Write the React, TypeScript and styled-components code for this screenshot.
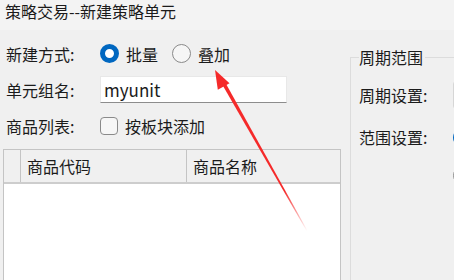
import React from "react";
import styled, { createGlobalStyle } from "styled-components";

const GlobalStyle = createGlobalStyle`
  html, body {
    margin: 0;
    padding: 0;
    background: #f0f0f0;
    overflow: hidden;
  }

  body {
    font-family: "Microsoft YaHei UI", "Noto Sans CJK SC", sans-serif;
    font-size: 16px;
    color: #1b1b1b;
  }
`;

const Window = styled.div`
  position: relative;
  width: 454px;
  height: 280px;
  overflow: hidden;
`;

const TitleBar = styled.div`
  height: 30px;
  padding: 3px 0 0 5px;
  box-sizing: border-box;
  background: #f3f3f3;
  font-size: 16px;
  line-height: 16px;
`;

const Content = styled.div`
  display: flex;
  align-items: flex-start;
`;

const LeftColumn = styled.div`
  width: 344px;
  flex-shrink: 0;
  display: flex;
  flex-direction: column;
  padding-top: 10px;
`;

const FormRow = styled.div`
  display: flex;
  align-items: center;
  height: 27px;
  margin-bottom: 9px;
`;

const Label = styled.span<{ $width?: number; $indent?: number }>`
  display: block;
  width: ${({ $width }) => $width ?? 100}px;
  flex-shrink: 0;
  padding-left: ${({ $indent }) => $indent ?? 6}px;
  box-sizing: border-box;
  white-space: nowrap;
  line-height: 16px;
`;

const Option = styled.label`
  display: flex;
  align-items: center;
  gap: 7px;
  margin-right: 14px;
  line-height: 16px;
`;

const RadioDot = styled.span<{ $checked?: boolean }>`
  display: block;
  flex-shrink: 0;
  width: 19px;
  height: 19px;
  box-sizing: border-box;
  border-radius: 50%;
  background: ${({ $checked }) => ($checked ? "#ffffff" : "#f6f6f6")};
  border: ${({ $checked }) =>
    $checked ? "5.5px solid #0067c0" : "1px solid #8a8a8a"};
`;

const CheckBox = styled.span`
  display: block;
  width: 18px;
  height: 18px;
  box-sizing: border-box;
  border: 1px solid #8a8a8a;
  border-radius: 4px;
  background: #f6f6f6;
`;

const TextInput = styled.div`
  width: 187px;
  height: 27px;
  box-sizing: border-box;
  padding-left: 3px;
  display: flex;
  align-items: center;
  background: #ffffff;
  border: 1px solid #e8e8e8;
  border-bottom: 1px solid #8d8d8d;
  font-size: 17px;
`;

const Table = styled.div`
  margin: 1px 0 0 3px;
  width: 338px;
  height: 140px;
  box-sizing: border-box;
  border: 1px solid #c4c4c4;
  border-bottom: none;
  background: #ffffff;
`;

const HeadRow = styled.div`
  display: grid;
  grid-template-columns: 17px 166px 1fr;
  height: 34px;
  background: #f0f0f0;
  border-bottom: 2px solid #cdcdcd;
  box-sizing: border-box;
`;

const HeadCell = styled.div`
  display: flex;
  align-items: center;
  padding-left: 6px;
  border-right: 1px solid #c4c4c4;
  line-height: 16px;

  &:last-child {
    border-right: none;
  }
`;

const GroupBox = styled.fieldset`
  flex: 1;
  min-width: 0;
  margin: 19px 0 0 6px;
  padding: 0 0 0 8px;
  height: 260px;
  border: 1px solid #dcdcdc;
  border-right: none;
  border-bottom: none;
`;

const Legend = styled.legend`
  padding: 0 2px 0 0;
  line-height: 16px;
`;

const GroupRow = styled.div<{ $top: number }>`
  display: flex;
  align-items: center;
  height: 28px;
  margin-top: ${({ $top }) => $top}px;
`;

const ComboEdge = styled.div`
  flex-shrink: 0;
  width: 40px;
  height: 28px;
  box-sizing: border-box;
  border: 1px solid #d6d6d6;
  border-radius: 3px;
  background: #fbfbfb;
`;

const ArrowLayer = styled.svg`
  position: absolute;
  left: 0;
  top: 0;
  pointer-events: none;
`;

const Radio = ({ checked, text }: { checked?: boolean; text: string }) => (
  <Option>
    <RadioDot $checked={checked} />
    {text}
  </Option>
);

// red annotation arrow drawn over the dialog
const Arrow = () => (
  <ArrowLayer width={454} height={280}>
    <defs>
      <linearGradient id="tail" x1="215" y1="70" x2="307" y2="231" gradientUnits="userSpaceOnUse">
        <stop offset="0" stopColor="#f52a2a" stopOpacity="1" />
        <stop offset="0.75" stopColor="#f52a2a" stopOpacity="1" />
        <stop offset="1" stopColor="#f52a2a" stopOpacity="0" />
      </linearGradient>
    </defs>
    <polygon points="222.2,84.6 225.4,82.8 307.4,230.6 306.6,231" fill="url(#tail)" />
    <polygon points="215,70 229.5,83.2 217.8,89.8" fill="#f52a2a" />
  </ArrowLayer>
);

export default function App() {
  return (
    <Window>
      <GlobalStyle />
      <TitleBar>策略交易--新建策略单元</TitleBar>
      <Content>
        <LeftColumn>
          <FormRow>
            <Label>新建方式:</Label>
            <Radio checked text="批量" />
            <Radio text="叠加" />
          </FormRow>
          <FormRow>
            <Label>单元组名:</Label>
            <TextInput>myunit</TextInput>
          </FormRow>
          <FormRow>
            <Label>商品列表:</Label>
            <Option>
              <CheckBox />
              按板块添加
            </Option>
          </FormRow>
          <Table>
            <HeadRow>
              <HeadCell />
              <HeadCell>商品代码</HeadCell>
              <HeadCell>商品名称</HeadCell>
            </HeadRow>
          </Table>
        </LeftColumn>
        <GroupBox>
          <Legend>周期范围</Legend>
          <GroupRow $top={16}>
            <Label $width={94} $indent={0}>周期设置:</Label>
            <ComboEdge />
          </GroupRow>
          <GroupRow $top={14}>
            <Label $width={94} $indent={0}>范围设置:</Label>
            <RadioDot $checked />
          </GroupRow>
          <GroupRow $top={10}>
            <Label $width={94} $indent={0} />
            <RadioDot />
          </GroupRow>
        </GroupBox>
      </Content>
      <Arrow />
    </Window>
  );
}
